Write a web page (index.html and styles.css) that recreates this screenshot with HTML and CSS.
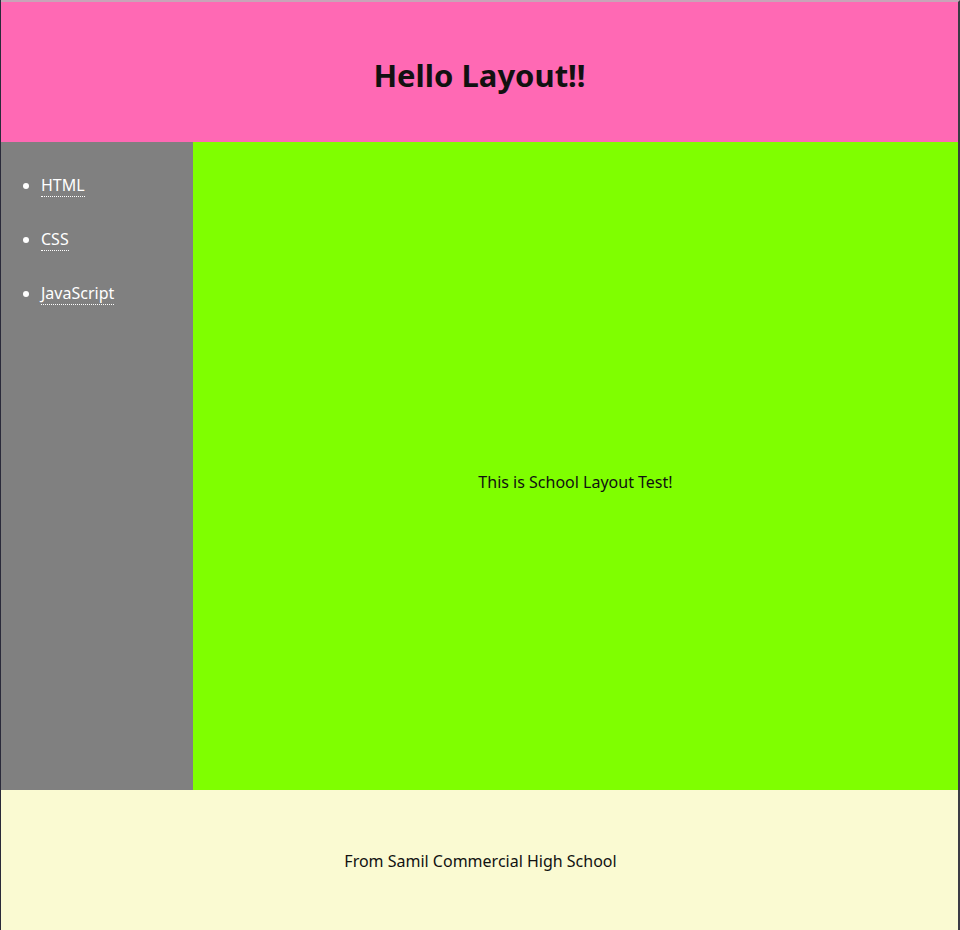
FILE: index.html
```html
<!DOCTYPE html>
<html>
<head>
<meta charset="utf-8">
<title>Hello Layout</title>
<link rel="stylesheet" href="styles.css">
</head>
<body>
<div class="frame">
  <header class="header"><h1>Hello Layout!!</h1></header>
  <div class="middle">
    <nav class="sidebar">
      <ul>
        <li><a href="#">HTML</a></li>
        <li><a href="#">CSS</a></li>
        <li><a href="#">JavaScript</a></li>
      </ul>
    </nav>
    <main class="content"><p>This is School Layout Test!</p></main>
  </div>
  <footer class="footer"><p>From Samil Commercial High School</p></footer>
</div>
</body>
</html>
```
FILE: styles.css
```css
html, body {
  margin: 0;
  padding: 0;
  height: 930px;
  overflow: hidden;
  background: #2a2a3a;
}
body {
  font-family: "Noto Sans", "Noto Sans CJK KR", sans-serif;
  font-size: 16px;
  color: #111;
}
.frame {
  margin-left: 1px;
  border-top: 2px solid #c8a4b8;
  width: 957px;
  height: 928px;
  display: flex;
  flex-direction: column;
  border-right: 2px solid #3a3a44;
}
.header {
  height: 140px;
  background: #ff69b4;
  display: flex;
  align-items: center;
  justify-content: center;
  padding-top: 6px;
  box-sizing: border-box;
}
.header h1 {
  margin: 0;
  font-size: 31px;
  font-weight: bold;
  color: #111;
}
.middle {
  display: flex;
  height: 648px;
}
.sidebar {
  width: 192px;
  background: #808080;
}
.sidebar ul {
  margin: 0;
  padding: 31px 0 0 40px;
  color: #fff;
  display: flex;
  flex-direction: column;
  gap: 30px;
}
.sidebar li {
  line-height: 24px;
}
.sidebar a {
  color: #fff;
  text-decoration: none;
  border-bottom: 1px dotted #fff;
}
.content {
  flex: 1;
  background: #7fff00;
  display: flex;
  align-items: center;
  justify-content: center;
  padding-top: 32px;
}
.content p, .footer p {
  margin: 0;
}
.footer {
  height: 140px;
  background: #fafad2;
  display: flex;
  align-items: center;
  justify-content: center;
  padding-top: 2px;
  padding-left: 2px;
  box-sizing: border-box;
}
```
